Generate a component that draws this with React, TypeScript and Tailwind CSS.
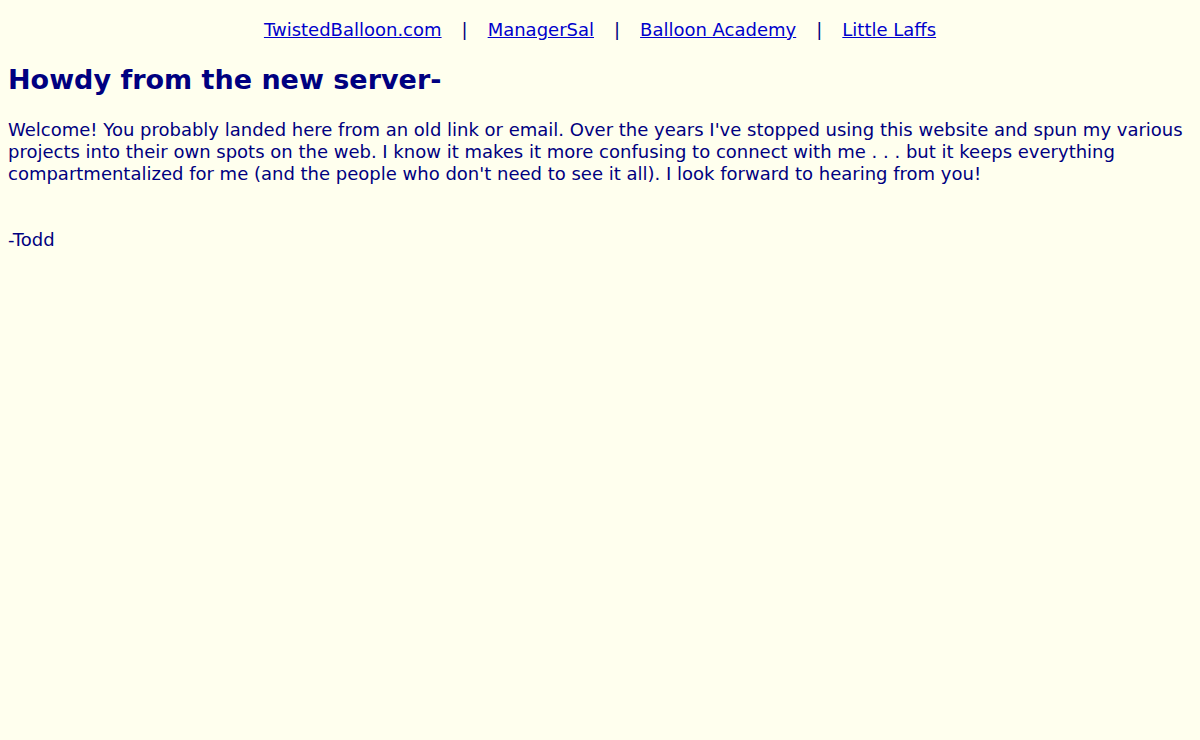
export default function App() {
  const links = ["TwistedBalloon.com", "ManagerSal", "Balloon Academy", "Little Laffs"];
  return (
    <div className="min-h-[740px] bg-[#ffffee] px-2 pt-[19px] text-[#000080]" style={{ fontFamily: '"DejaVu Sans", Verdana, sans-serif' }}>
      <div className="flex justify-center text-[18px] leading-[22px]">
        {links.map((l, i) => (
          <span key={l} className="flex">
            {i > 0 && <span className="px-[20px]">|</span>}
            <a href="#" className="text-[#0000cc] underline">{l}</a>
          </span>
        ))}
      </div>
      <h1 className="mt-[22px] text-[27px] font-bold leading-[34px] text-[#000080]">Howdy from the new server-</h1>
      <p className="mt-[22px] text-[18px] leading-[22px]">
        Welcome! You probably landed here from an old link or email. Over the years I've stopped using this website and spun my various projects into their own spots on the web. I know it makes it more confusing to connect with me . . . but it keeps everything compartmentalized for me (and the people who don't need to see it all). I look forward to hearing from you!
      </p>
      <p className="mt-[44px] text-[18px] leading-[22px]">-Todd</p>
    </div>
  );
}
